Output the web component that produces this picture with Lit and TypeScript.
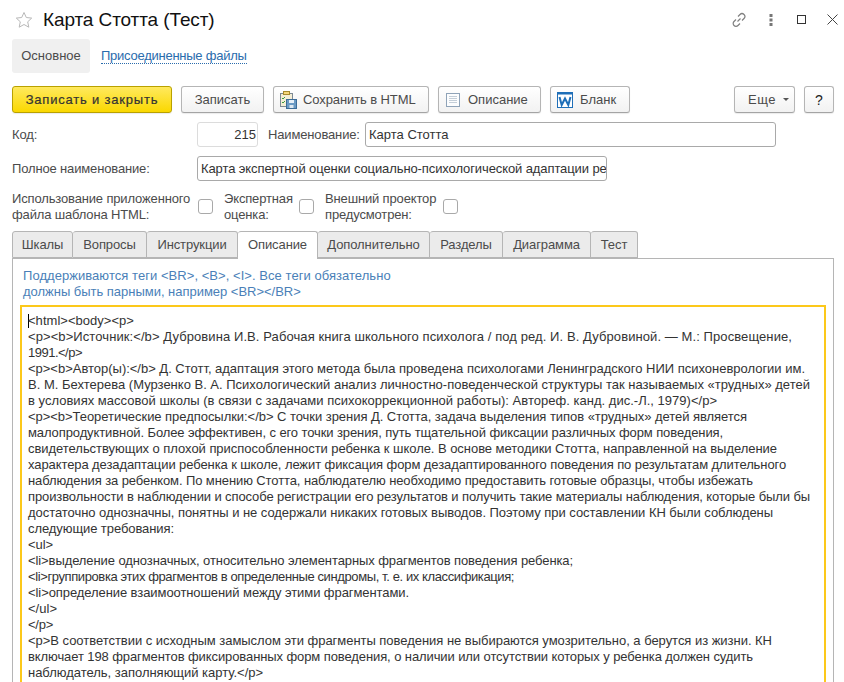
import { LitElement, html, css, svg } from 'lit';
import { customElement } from 'lit/decorators.js';

const TABS: [string, number][] = [
    ['Шкалы', 61],
    ['Вопросы', 74],
    ['Инструкции', 91],
    ['Описание', 80],
    ['Дополнительно', 112],
    ['Разделы', 73],
    ['Диаграмма', 88],
    ['Тест', 47],
];

// text of the editor, with the x where each line ends in the original
const LINES: [string, number][] = [
    ['<html><body><p>', 134],
    ['<p><b>Источник:</b> Дубровина И.В. Рабочая книга школьного психолога / под ред. И. В. Дубровиной. — М.: Просвещение,', 792],
    ['1991.</p>', 82],
    ['<p><b>Автор(ы):</b> Д. Стотт, адаптация этого метода была проведена психологами Ленинградского НИИ психоневрологии им.', 805],
    ['В. М. Бехтерева (Мурзенко В. А. Психологический анализ личностно-поведенческой структуры так называемых «трудных» детей', 810],
    ['в условиях массовой школы (в связи с задачами психокоррекционной работы): Автореф. канд. дис.-Л., 1979)</p>', 717],
    ['<p><b>Теоретические предпосылки:</b> С точки зрения Д. Стотта, задача выделения типов «трудных» детей является', 747],
    ['малопродуктивной. Более эффективен, с его точки зрения, путь тщательной фиксации различных форм поведения,', 723],
    ['свидетельствующих о плохой приспособленности ребенка к школе. В основе методики Стотта, направленной на выделение', 777],
    ['характера дезадаптации ребенка к школе, лежит фиксация форм дезадаптированного поведения по результатам длительного', 786],
    ['наблюдения за ребенком. По мнению Стотта, наблюдателю необходимо предоставить готовые образцы, чтобы избежать', 753],
    ['произвольности в наблюдении и способе регистрации его результатов и получить такие материалы наблюдения, которые были бы', 810],
    ['достаточно однозначны, понятны и не содержали никаких готовых выводов. Поэтому при составлении КН были соблюдены', 773],
    ['следующие требования:', 174],
    ['<ul>', 53],
    ['<li>выделение однозначных, относительно элементарных фрагментов поведения ребенка;', 573],
    ['<li>группировка этих фрагментов в определенные синдромы, т. е. их классификация;', 514],
    ['<li>определение взаимоотношений между этими фрагментами.', 409],
    ['</ul>', 57],
    ['</p>', 53],
    ['<p>В соответствии с исходным замыслом эти фрагменты поведения не выбираются умозрительно, а берутся из жизни. КН', 772],
    ['включает 198 фрагментов фиксированных форм поведения, о наличии или отсутствии которых у ребенка должен судить', 753],
    ['наблюдатель, заполняющий карту.</p>', 263],
];

const TEXT_LEFT = 28;

const measure = document.createElement('canvas').getContext('2d')!;
measure.font = "13px 'Liberation Sans'";

function spacing(text: string, end: number) {
    const extra = end - TEXT_LEFT - measure.measureText(text).width;
    return (extra / text.length).toFixed(3);
}

const saveIcon = svg`<svg width="18" height="18" viewBox="0 0 18 18">
    <rect x="0.500" y="2.500" width="12" height="13" fill="#f5eed6" stroke="#7d8a94"/>
    <rect x="3.500" y="0.500" width="6" height="3" fill="#f6d77a" stroke="#a88a30"/>
    <path d="M2 7l1 1 2-2M2 11l1 1 2-2" fill="none" stroke="#3f9a3f"/>
    <rect x="6.500" y="8.500" width="10" height="9" fill="#6b9ac4" stroke="#3c6c98"/>
    <rect x="9" y="9" width="5" height="3" fill="#e8f0f8"/>
    <rect x="9.500" y="14" width="4" height="3" fill="#dfe8f0"/>
</svg>`;

const docIcon = svg`<svg width="14" height="16" viewBox="0 0 14 16">
    <rect x="0.500" y="1.500" width="13" height="13" fill="#fcfdfe" stroke="#8fa3b8"/>
    <path d="M3 4.500h8M3 6.500h8M3 8.500h8M3 10.500h8" stroke="#c4ced8"/>
</svg>`;

const wordIcon = svg`<svg width="16" height="16" viewBox="0 0 16 16">
    <rect x="0.500" y="0.500" width="15" height="15" fill="#fff" stroke="#1f6fb8"/>
    <rect x="0" y="0" width="16" height="2.500" fill="#1f6fb8"/>
    <path d="M2.500 5l2.200 8 3.300-6.500 3.300 6.500 2.200-8" fill="none" stroke="#1f6fb8" stroke-width="2"/>
</svg>`;

@customElement('app-root')
export class AppRoot extends LitElement {
    static styles = css`
        :host {
            display: block;
            width: 844px;
            height: 682px;
            overflow: hidden;
            background: #fff;
            color: #4b4b4b;
            font-family: 'Liberation Sans', Arial, sans-serif;
            font-size: 13px;
            line-height: 16px;
        }

        .head {
            display: flex;
            align-items: center;
            height: 39px;
            padding: 0 0 0 15px;
            box-sizing: border-box;
        }

        .star {
            margin-right: 10px;
        }

        .title {
            font-size: 19px;
            color: #111;
            flex: 1;
            line-height: 39px;
            letter-spacing: -0.1px;
        }

        .wintools {
            display: flex;
            align-items: center;
            padding-right: 6px;
        }

        .wintools svg {
            display: block;
        }

        .pages {
            display: flex;
            align-items: center;
            height: 34px;
            margin: 0 0 13px 12px;
        }

        .page-on {
            width: 78px;
            height: 34px;
            line-height: 34px;
            text-align: center;
            background: #f0f0f0;
            border-radius: 3px;
        }

        .page-link {
            margin-left: 11px;
            color: #2a6cad;
            border-bottom: 1px dotted #2a6cad;
            line-height: 14px;
            letter-spacing: -0.25px;
        }

        .bar {
            display: flex;
            height: 27px;
            margin: 0 10px 9px 12px;
        }

        .btn {
            box-sizing: border-box;
            display: flex;
            align-items: center;
            justify-content: center;
            height: 27px;
            margin-right: 9px;
            border: 1px solid #b5b5b5;
            border-bottom-color: #a4a4a4;
            border-radius: 3px;
            background: linear-gradient(#fff, #f2f2f2);
            color: #4b4b4b;
            box-shadow: 0 1px 1px rgba(0, 0, 0, 0.08);
            white-space: nowrap;
        }

        .btn.primary {
            background: linear-gradient(#ffe95e, #fad800);
            border-color: #b9a100;
            color: #333;
            -webkit-text-stroke: 0.2px #333;
            letter-spacing: 0.8px;
        }

        .btn.start {
            justify-content: flex-start;
        }

        .more {
            padding-left: 13px;
            gap: 7px;
            letter-spacing: 0.5px;
        }

        .help {
            margin-right: 0;
            font-size: 14px;
            color: #222;
        }

        .spacer {
            flex: 1;
        }

        .caret {
            width: 0;
            height: 0;
            border: 3px solid transparent;
            border-top: 3px solid #555;
            border-bottom: 0;
        }

        .row {
            display: flex;
            align-items: center;
            margin-left: 12px;
        }

        .narrow {
            letter-spacing: -0.15px;
        }

        .field {
            box-sizing: border-box;
            height: 25px;
            line-height: 23px;
            border: 1px solid #a9a9a9;
            border-radius: 3px;
            padding: 0 3px;
            color: #333;
            white-space: nowrap;
            overflow: hidden;
        }

        .field.code {
            border-color: #dcdcdc;
            text-align: right;
            padding: 0 1px 0 0;
            width: 61px;
        }

        .field.full {
            letter-spacing: -0.1px;
        }

        .r1 {
            height: 25px;
            margin-bottom: 9px;
        }

        .r2 {
            height: 25px;
            margin-bottom: 7px;
        }

        .r3 {
            height: 37px;
            margin-bottom: 6px;
        }

        .box {
            box-sizing: border-box;
            flex: none;
            width: 15px;
            height: 15px;
            border: 1px solid #a9a9a9;
            border-radius: 3px;
            background: #fff;
        }

        .tabs {
            display: flex;
            margin-left: 12px;
            height: 27px;
            position: relative;
            z-index: 1;
        }

        .tab {
            box-sizing: border-box;
            height: 27px;
            line-height: 26px;
            text-align: center;
            letter-spacing: -0.1px;
            background: #ebebeb;
            border: 1px solid #b5b5b5;
            border-left-width: 0;
            border-radius: 3px 3px 0 0;
        }

        .tab:first-child {
            border-left-width: 1px;
        }

        .tab.on {
            height: 28px;
            background: #fff;
            border-bottom: 0;
        }

        .panel {
            box-sizing: border-box;
            width: 822px;
            height: 440px;
            margin-left: 12px;
            padding: 9px 7px 0;
            border: 1px solid #b5b5b5;
        }

        .hint {
            color: #4a7fb8;
            margin-left: 3px;
            margin-bottom: 5px;
            letter-spacing: 0.05px;
        }

        .hint-last {
            letter-spacing: -0.02px;
        }

        .editor {
            box-sizing: border-box;
            width: 806px;
            height: 400px;
            border: 2px solid #fcc81a;
            padding: 6px 0 0 6px;
            color: #333;
        }

        .line {
            height: 16px;
            white-space: pre;
        }

        .cursor {
            display: inline-block;
            width: 1px;
            height: 14px;
            margin-right: -1px;
            background: #000;
            vertical-align: -3px;
        }
    `;

    render() {
        return html`
            <div class="head">
                <svg class="star" width="18" height="18" viewBox="0 0 18 18">
                    <path d="M9 1.500l2.300 5 5.400.6-4 3.700 1.100 5.400L9 13.500l-4.800 2.700 1.100-5.400-4-3.700 5.400-.6z" fill="none" stroke="#b8b8b8"/>
                </svg>
                <div class="title">Карта Стотта (Тест)</div>
                <div class="wintools">
                    <svg width="16" height="16" viewBox="0 0 16 16" fill="none" stroke="#808080" stroke-width="1.200">
                        <path d="M6.500 9.500l3-3M7 4.500l2-2a2.800 2.800 0 0 1 4 4l-2 2M9 11.500l-2 2a2.800 2.800 0 0 1-4-4l2-2"/>
                    </svg>
                    <svg style="margin-left:22px" width="4" height="12" viewBox="0 0 4 12" fill="#777">
                        <rect x="0.500" y="0" width="3" height="3"/><rect x="0.500" y="4.500" width="3" height="3"/><rect x="0.500" y="9" width="3" height="3"/>
                    </svg>
                    <svg style="margin-left:23px" width="11" height="11" viewBox="0 0 11 11" fill="none" stroke="#333"><rect x="1.500" y="1.500" width="8" height="8"/></svg>
                    <svg style="margin-left:20px" width="11" height="11" viewBox="0 0 11 11" fill="none" stroke="#444"><path d="M.5.500l10 10M10.500.500l-10 10"/></svg>
                </div>
            </div>
            <div class="pages">
                <div class="page-on">Основное</div>
                <div class="page-link">Присоединенные файлы</div>
            </div>
            <div class="bar">
                <div class="btn primary" style="width:160px">Записать и закрыть</div>
                <div class="btn" style="width:83px">Записать</div>
                <div class="btn start" style="width:156px;padding-left:6px;gap:5px;letter-spacing:-0.1px">${saveIcon}Сохранить в HTML</div>
                <div class="btn start" style="width:103px;padding-left:7px;gap:8px">${docIcon}Описание</div>
                <div class="btn start" style="width:80px;padding-left:6px;gap:7px">${wordIcon}Бланк</div>
                <div class="spacer"></div>
                <div class="btn start more" style="width:61px">Еще<span class="caret"></span></div>
                <div class="btn help" style="width:30px">?</div>
            </div>
            <div class="row r1">
                <div class="narrow" style="width:185px">Код:</div>
                <div class="field code">215</div>
                <div class="narrow" style="width:97px;margin-left:10px">Наименование:</div>
                <div class="field" style="width:411px">Карта Стотта</div>
            </div>
            <div class="row r2">
                <div class="narrow" style="width:185px">Полное наименование:</div>
                <div class="field full" style="width:410px">Карта экспертной оценки социально-психологической адаптации ребенка</div>
            </div>
            <div class="row r3">
                <div class="narrow" style="width:186px">Использование приложенного<br />файла шаблона HTML:</div>
                <div class="box"></div>
                <div class="narrow" style="width:75px;margin-left:11px">Экспертная<br />оценка:</div>
                <div class="box"></div>
                <div class="narrow" style="width:118px;margin-left:11px">Внешний проектор<br />предусмотрен:</div>
                <div class="box"></div>
            </div>
            <div class="tabs">
                ${TABS.map(([t, w]) => html`<div class="tab ${t === 'Описание' ? 'on' : ''}" style="width:${w}px">${t}</div>`)}
            </div>
            <div class="panel">
                <div class="hint">Поддерживаются теги &lt;BR&gt;, &lt;B&gt;, &lt;I&gt;. Все теги обязательно<br /><span class="hint-last">должны быть парными, например &lt;BR&gt;&lt;/BR&gt;</span></div>
                <div class="editor">
                    ${LINES.map(
                        ([text, end], i) => html`<div class="line" style="letter-spacing:${spacing(text, end)}px">${i === 0 ? html`<span class="cursor"></span>` : ''}${text}</div>`
                    )}
                </div>
            </div>
        `;
    }
}
